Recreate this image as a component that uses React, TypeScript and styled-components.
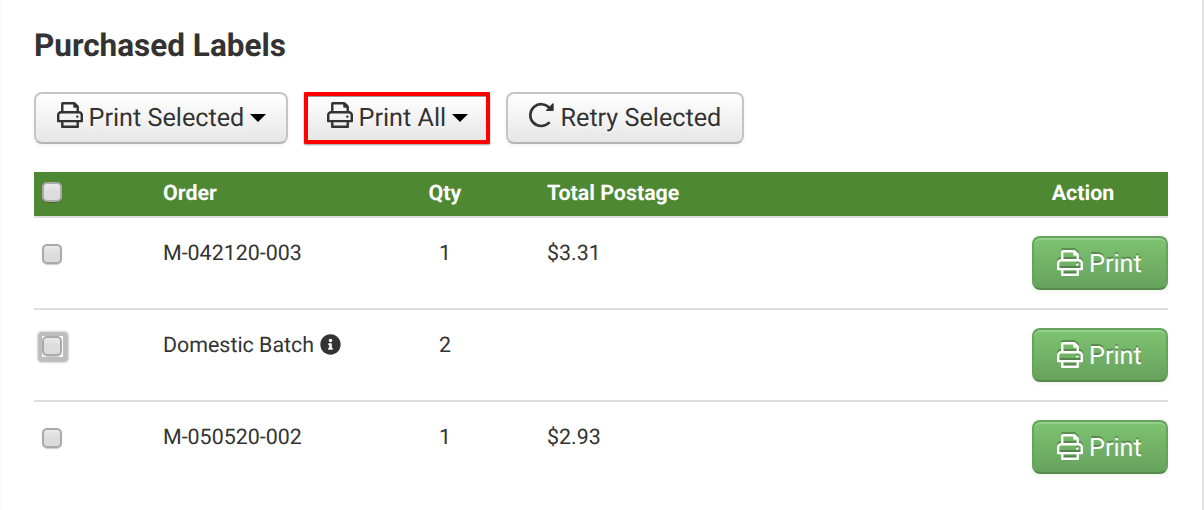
import { FC, ReactNode } from "react";

import styled, { createGlobalStyle, css } from "styled-components";
import { FaInfoCircle } from "react-icons/fa";

const GlobalStyle = createGlobalStyle`
  * {
    box-sizing: border-box;
  }

  body {
    margin: 0;
    background: #fff;
    color: #333;
    font-family: Roboto, "Liberation Sans", sans-serif;
    font-size: 21.4px;
    text-rendering: geometricPrecision;
    -webkit-font-smoothing: antialiased;
  }
`;

const Page = styled.main`
  height: 510px;
  padding: 25px 34px 0 33px;
  border-left: 1px solid #fafafa;
  border-right: 2px solid #e0e0e0;
`;

const Title = styled.h1`
  margin: 0;
  font-size: 31.5px;
  font-weight: 700;
  line-height: 42px;
`;

const Toolbar = styled.div`
  display: flex;
  gap: 16px;
  margin-top: 25px;
`;

const buttonBase = css`
  display: flex;
  align-items: center;
  margin: 0;
  font-family: inherit;
  font-size: 25.2px;
  line-height: 1;
  text-rendering: inherit;
  white-space: nowrap;
`;

const ToolButton = styled.button<{ $width: number; $highlighted?: boolean }>`
  ${buttonBase}
  width: ${({ $width }) => $width}px;
  height: 52px;
  padding: 2px 0 0 21px;
  color: #333;
  background: linear-gradient(#ffffff, #e6e6e6);
  border: 2px solid #c5c5c5;
  border-bottom-color: #b3b3b3;
  border-radius: 8px;
  box-shadow: 0 2px 4px rgba(0, 0, 0, 0.05);
  text-shadow: 0 2px 2px rgba(255, 255, 255, 0.75);

  ${({ $highlighted }) =>
    $highlighted &&
    css`
      padding-left: 19px;
      border: 4px solid #fe0000;
      border-radius: 1px;
      box-shadow: inset 0 1px 0 #999, 0 1px 2px rgba(0, 0, 0, 0.4);
    `}
`;

const PrintButton = styled.button`
  ${buttonBase}
  width: 136px;
  height: 54px;
  margin-left: auto;
  padding: 4px 0 0 23px;
  color: #fff;
  background: linear-gradient(#7dc371, #67a25c);
  border: 2px solid #64a45a;
  border-bottom-color: #538a4a;
  border-radius: 8px;
  box-shadow: inset 0 2px 0 rgba(255, 255, 255, 0.2),
    0 2px 4px rgba(0, 0, 0, 0.05);
  text-shadow: 0 -2px 0 rgba(0, 0, 0, 0.25);

  svg {
    margin-right: 6px;
    filter: drop-shadow(0 -2px 0 rgba(0, 0, 0, 0.25));
  }
`;

const Icon = styled.svg<{ $drop: number }>`
  flex: none;
  width: 26px;
  height: 26px;
  margin-right: 5.5px;
  margin-top: ${({ $drop }) => $drop}px;
  fill: currentColor;
`;

const Caret = styled.span`
  margin: -2px 0 0 6px;
  border: 8px solid transparent;
  border-top-color: #000;
  border-bottom: 0;
`;

const Table = styled.table`
  width: 100%;
  margin-top: 28px;
  table-layout: fixed;
  border-collapse: separate;
  border-spacing: 0;
`;

const HeadCell = styled.th<{ $width?: number; $align?: string }>`
  width: ${({ $width }) => ($width ? `${$width}px` : "auto")};
  height: 44px;
  padding: 0 8px;
  color: #fff;
  background: #4e8832;
  font-weight: 700;
  line-height: 40px;
  text-align: ${({ $align = "left" }) => $align};
  vertical-align: middle;
`;

const Cell = styled.td<{ $align?: string }>`
  height: 92px;
  padding: 18px 8px 0;
  border-top: 2px solid #ddd;
  line-height: 36px;
  text-align: ${({ $align = "left" }) => $align};
  vertical-align: top;
`;

const ActionCell = styled(Cell)`
  padding: 18px 0 0;
`;

const Checkbox = styled.input<{ $top: number; $focused?: boolean }>`
  position: relative;
  display: block;
  appearance: none;
  width: 20px;
  height: 20px;
  margin: ${({ $top }) => $top}px 0 0;
  background: linear-gradient(#eaeaea, #dcdcdc 50%);
  border: 2px solid #aaa;
  border-radius: 5px;
  box-shadow: 0 1px 1px rgba(0, 0, 0, 0.2);

  ${({ $focused }) =>
    $focused &&
    css`
      &::before {
        content: "";
        position: absolute;
        inset: -6px -8px -8px -6px;
        border: solid #bebebe;
        border-width: 4px 5px 5px 4px;
        border-radius: 4px;
        box-shadow: 0 0 0 1.5px #e4e4e6;
      }
    `}
`;

const OrderName = styled.div`
  display: flex;
  align-items: center;

  svg {
    width: 21px;
    height: 21px;
    margin: -4px 0 0 5.5px;
  }
`;

const PrinterIcon: FC<{ drop: number }> = ({ drop }) => (
  <Icon viewBox="0 0 512 512" $drop={drop}>
    <path d="M400 264c-13.25 0-24 10.74-24 24 0 13.25 10.75 24 24 24s24-10.75 24-24c0-13.26-10.75-24-24-24zm32-88V99.88c0-12.74-5.06-24.95-14.06-33.94l-51.88-51.88c-9-9-21.21-14.06-33.94-14.06H110.48C93.64 0 80 14.33 80 32v144c-44.18 0-80 35.82-80 80v128c0 8.84 7.16 16 16 16h64v96c0 8.84 7.16 16 16 16h320c8.84 0 16-7.16 16-16v-96h64c8.84 0 16-7.16 16-16V256c0-44.18-35.82-80-80-80zM128 48h192v48c0 8.84 7.16 16 16 16h48v64H128V48zm256 416H128v-64h256v64zm80-112H48v-96c0-17.64 14.36-32 32-32h352c17.64 0 32 14.36 32 32v96z" />
  </Icon>
);

const RetryIcon: FC = () => (
  <Icon viewBox="0 0 26 26" $drop={-9}>
    <path
      d="M20.5 6A10.9 10.9 0 1 0 19.8 20.9"
      fill="none"
      stroke="currentColor"
      strokeWidth="2.6"
      strokeLinecap="round"
    />
    <path d="M23.7 1.3Q24.7.8 24.7 1.8V8.2Q24.7 9 23.9 9H17.6Q16.4 8.8 17.2 7.9Z" />
  </Icon>
);

interface Label {
  order: ReactNode;
  qty: number;
  postage?: string;
  focused?: boolean;
}

const labels: Label[] = [
  { order: "M-042120-003", qty: 1, postage: "$3.31" },
  {
    order: (
      <OrderName>
        Domestic Batch <FaInfoCircle />
      </OrderName>
    ),
    qty: 2,
    focused: true,
  },
  { order: "M-050520-002", qty: 1, postage: "$2.93" },
];

const App: FC = () => {
  return (
    <>
      <GlobalStyle />
      <Page>
        <Title>Purchased Labels</Title>
        <Toolbar>
          <ToolButton $width={254}>
            <PrinterIcon drop={-9} />
            Print Selected
            <Caret />
          </ToolButton>
          <ToolButton $width={186} $highlighted>
            <PrinterIcon drop={-9} />
            Print All
            <Caret />
          </ToolButton>
          <ToolButton $width={238}>
            <RetryIcon />
            Retry Selected
          </ToolButton>
        </Toolbar>
        <Table>
          <thead>
            <tr>
              <HeadCell $width={121}>
                <Checkbox type="checkbox" $top={-4} />
              </HeadCell>
              <HeadCell $width={250}>Order</HeadCell>
              <HeadCell $width={80} $align="center">
                Qty
              </HeadCell>
              <HeadCell $width={54} />
              <HeadCell>Total Postage</HeadCell>
              <HeadCell $width={170} $align="center">
                Action
              </HeadCell>
            </tr>
          </thead>
          <tbody>
            {labels.map(({ order, qty, postage, focused }, index) => (
              <tr key={index}>
                <Cell>
                  <Checkbox type="checkbox" $top={8} $focused={focused} />
                </Cell>
                <Cell>{order}</Cell>
                <Cell $align="center">{qty}</Cell>
                <Cell />
                <Cell>{postage}</Cell>
                <ActionCell>
                  <PrintButton>
                    <PrinterIcon drop={-4} />
                    Print
                  </PrintButton>
                </ActionCell>
              </tr>
            ))}
          </tbody>
        </Table>
      </Page>
    </>
  );
};

export default App;
